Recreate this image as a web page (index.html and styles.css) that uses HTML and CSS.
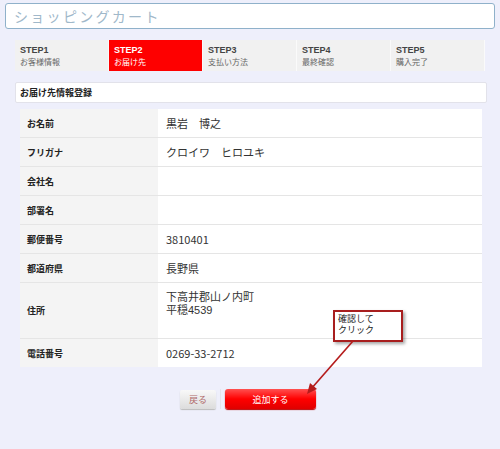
FILE: index.html
```html
<!DOCTYPE html>
<html lang="ja">
<head>
<meta charset="utf-8">
<link rel="stylesheet" href="styles.css">
</head>
<body>
<div class="page">
  <div class="title">ショッピングカート</div>
  <div class="steps">
    <div class="step"><b>STEP1</b><span>お客様情報</span></div>
    <div class="step active"><b>STEP2</b><span>お届け先</span></div>
    <div class="step"><b>STEP3</b><span>支払い方法</span></div>
    <div class="step"><b>STEP4</b><span>最終確認</span></div>
    <div class="step"><b>STEP5</b><span>購入完了</span></div>
  </div>
  <div class="section">お届け先情報登録</div>
  <div class="table">
    <div class="row"><div class="label">お名前</div><div class="value">黒岩　博之</div></div>
    <div class="row"><div class="label">フリガナ</div><div class="value">クロイワ　ヒロユキ</div></div>
    <div class="row"><div class="label">会社名</div><div class="value"></div></div>
    <div class="row"><div class="label">部署名</div><div class="value"></div></div>
    <div class="row"><div class="label">郵便番号</div><div class="value">3810401</div></div>
    <div class="row"><div class="label">都道府県</div><div class="value">長野県</div></div>
    <div class="row tall"><div class="label">住所</div><div class="value multi">下高井郡山ノ内町<br>平穏4539</div></div>
    <div class="row last"><div class="label">電話番号</div><div class="value">0269-33-2712</div></div>
  </div>
  <div class="buttons">
    <div class="btn back">戻る</div>
    <div class="sep"></div>
    <div class="btn add">追加する</div>
  </div>
  <div class="callout">確認して<br>クリック</div>
  <svg class="arrow" width="60" height="60" viewBox="0 0 60 60">
    <line x1="48" y1="1" x2="6" y2="49" stroke="#b51c1c" stroke-width="1.6"/>
    <polygon points="2,54 5,43 12,49" fill="#b51c1c"/>
  </svg>
</div>
</body>
</html>
```
FILE: styles.css
```css
html, body {
  margin: 0;
  padding: 0;
  background: #eeeffb;
  font-family: "Noto Sans CJK JP", "Liberation Sans", sans-serif;
}
.page {
  position: relative;
  width: 500px;
  height: 449px;
  padding: 3px 5px 0 5px;
  box-sizing: border-box;
}
.title {
  height: 24px;
  border: 1px solid #8fb1ca;
  border-radius: 3px;
  background: #fff;
  color: #a0b8ca;
  font-size: 14px;
  letter-spacing: 2.3px;
  line-height: 24px;
  padding-left: 8px;
}
.steps {
  display: flex;
  margin: 11px 0 0 10px;
  width: 470px;
  height: 31px;
}
.step {
  width: 94px;
  background: #f1f1f1;
  border-right: 1px solid #fafafa;
  display: flex;
  flex-direction: column;
  padding: 5px 0 0 5px;
  box-sizing: border-box;
  color: #444;
}
.step b {
  font-family: "Liberation Sans", sans-serif;
  font-size: 9px;
  line-height: 11px;
}
.step span {
  font-size: 8px;
  line-height: 11px;
  color: #666;
}
.step.active {
  background: #fe0000;
  color: #fff;
}
.step.active span { color: #fff; }
.section {
  margin: 11px 0 0 10px;
  width: 466px;
  height: 19px;
  background: #fff;
  border: 1px solid #e2e2ea;
  border-radius: 2px;
  font-size: 9px;
  font-weight: bold;
  line-height: 19px;
  padding-left: 4px;
  color: #222;
}
.table {
  margin: 6px 0 0 15px;
  width: 462px;
  background: #fff;
}
.row {
  display: flex;
  height: 28px;
  border-bottom: 1px solid #e5e5e5;
}
.row.tall { height: 55px; }
.row.last { border-bottom: none; height: 28px; }
.label {
  width: 138px;
  background: #f4f4f4;
  font-size: 9px;
  font-weight: bold;
  color: #222;
  display: flex;
  align-items: center;
  padding-left: 7px;
  box-sizing: border-box;
}
.value {
  flex: 1;
  font-size: 11px;
  color: #333;
  display: flex;
  align-items: center;
  padding-left: 8px;
  line-height: 14px;
}
.value.multi {
  font-family: "Liberation Sans", "Noto Sans CJK JP", sans-serif;
  align-items: flex-start;
  line-height: 13px;
  padding-top: 8px;
  box-sizing: border-box;
}
.buttons {
  display: flex;
  align-items: center;
  margin: 22px 0 0 175px;
  gap: 4px;
}
.btn {
  font-size: 9px;
  display: flex;
  align-items: center;
  justify-content: center;
  border-radius: 2px;
}
.back {
  width: 36px;
  height: 19px;
  background: linear-gradient(#f8f8f8, #dcdcdc);
  color: #b06a6a;
  box-shadow: 0 1px 1px #bbb;
}
.sep {
  width: 1px;
  height: 20px;
  background: #e4e4ec;
}
.add {
  width: 91px;
  height: 20px;
  background: linear-gradient(#ff5050, #ff0000 50%, #e00000);
  color: #fff;
  border-radius: 3px;
  box-shadow: 0 1px 1px #b00;
}
.callout {
  position: absolute;
  left: 333px;
  top: 310px;
  width: 63px;
  height: 26px;
  border: 2px solid #a81e1e;
  background: #fff;
  font-family: "Liberation Sans", "Noto Sans CJK JP", sans-serif;
  font-size: 9px;
  line-height: 11px;
  padding: 2px 0 0 3px;
  color: #222;
  box-shadow: 2px 2px 3px rgba(0,0,0,0.35);
}
.arrow {
  position: absolute;
  left: 305px;
  top: 340px;
}
```
